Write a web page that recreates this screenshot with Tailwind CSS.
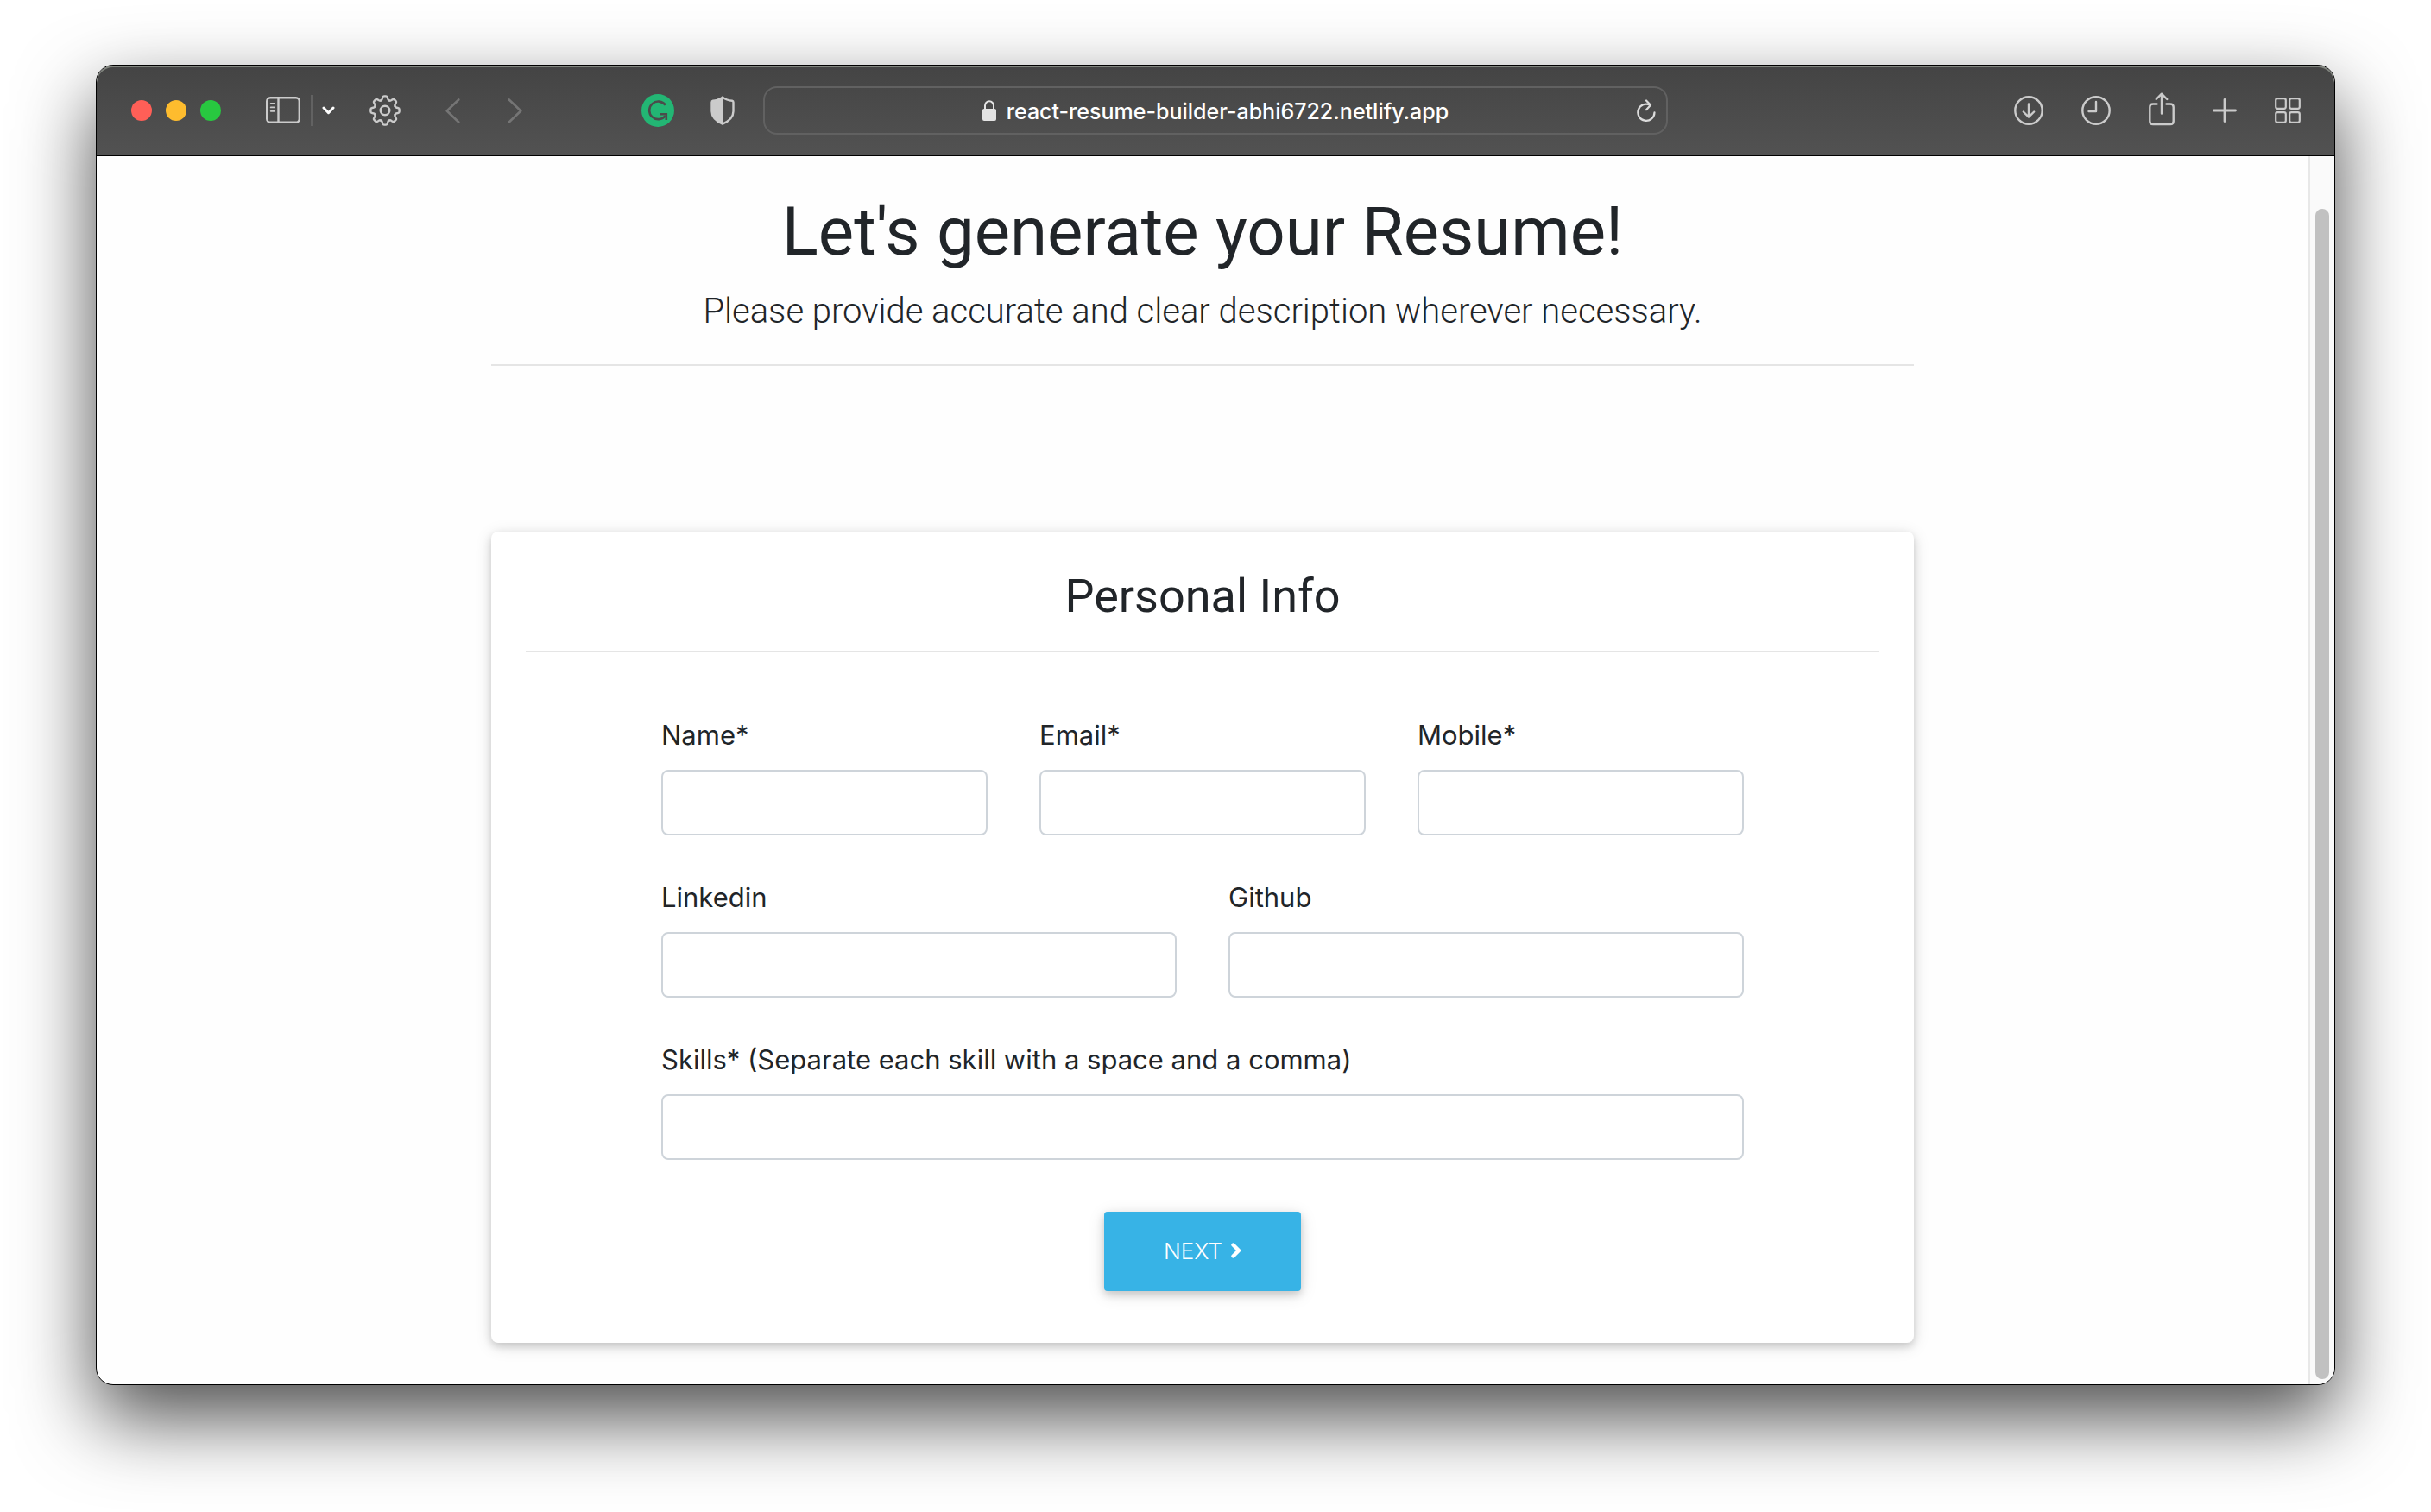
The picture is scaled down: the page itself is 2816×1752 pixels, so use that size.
<!DOCTYPE html>
<html lang="en">
<head>
<meta charset="utf-8">
<meta name="viewport" content="width=device-width, initial-scale=1">
<title>Resume Builder</title>
<script src="https://cdn.jsdelivr.net/npm/@tailwindcss/browser@4"></script>
</head>
<body class="flex min-h-screen flex-col bg-white px-[111px] pt-[75px] pb-[147px] font-['Inter',sans-serif] text-[#212529]">
<div class="flex flex-1 flex-col overflow-hidden rounded-[20px] border border-black bg-[#fefefe] shadow-[0_38px_90px_rgba(0,0,0,0.7)]">

  <!-- Browser toolbar -->
  <header class="grid h-[105px] grid-cols-[1fr_minmax(0,1048px)_1fr] items-center rounded-t-[19px] border-b border-black bg-linear-to-b from-[#444444] to-[#525252] text-[#cbcbcb] shadow-[inset_0_2px_0_#81857e]">
    <div class="flex items-center pr-[33px] pl-10">
      <div class="flex gap-4">
        <button type="button" aria-label="Close" class="size-6 rounded-full bg-[#ff5f57]"></button>
        <button type="button" aria-label="Minimize" class="size-6 rounded-full bg-[#febc2e]"></button>
        <button type="button" aria-label="Zoom" class="size-6 rounded-full bg-[#28c840]"></button>
      </div>
      <button type="button" aria-label="Sidebar" class="ml-[52px]">
        <svg class="block" width="40" height="32" viewBox="0 0 40 32" fill="none" stroke="currentColor" stroke-width="2.4" stroke-linecap="round"><rect x="1.2" y="1.2" width="37.6" height="28.6" rx="4"/><path d="M14.500 1.500v28"/><path stroke-width="1.8" d="M5.700 8h4M5.700 12.400h4M5.700 16.800h4"/></svg>
      </button>
      <span class="ml-3 h-9 w-[2px] bg-[#626262]"></span>
      <button type="button" aria-label="Sidebar options" class="ml-[11px] text-white">
        <svg class="block" width="15" height="10" viewBox="0 0 15 10" fill="none" stroke="currentColor" stroke-width="3" stroke-linecap="round" stroke-linejoin="round"><path d="M2 2l5.500 5.700L13 2"/></svg>
      </button>
      <button type="button" aria-label="Settings" class="ml-10">
        <svg class="block" width="36" height="36" viewBox="-18 -18 36 36" fill="none" stroke="currentColor" stroke-width="2.4" stroke-linecap="round" stroke-linejoin="round">
          <defs><path id="tooth" d="M-4.800-11.600Q-3.400-12.100-3.200-13.600L-3-14.800Q-2.600-16.600-1.200-16.600H1.200Q2.600-16.600 3-14.800L3.200-13.600Q3.400-12.100 4.800-11.600"/></defs>
          <use href="#tooth"/><use href="#tooth" transform="rotate(45)"/><use href="#tooth" transform="rotate(90)"/><use href="#tooth" transform="rotate(135)"/><use href="#tooth" transform="rotate(180)"/><use href="#tooth" transform="rotate(225)"/><use href="#tooth" transform="rotate(270)"/><use href="#tooth" transform="rotate(315)"/>
          <circle r="5.300"/>
        </svg>
      </button>
      <button type="button" aria-label="Back" class="ml-[52px] text-[#757575]">
        <svg class="block" width="17" height="29" viewBox="0 0 17 29" fill="none" stroke="currentColor" stroke-width="2.600" stroke-linecap="round" stroke-linejoin="round"><path d="M15.300 1.500L1.700 14.500l13.600 13"/></svg>
      </button>
      <button type="button" aria-label="Forward" class="ml-[55px] text-[#757575]">
        <svg class="block" width="17" height="29" viewBox="0 0 17 29" fill="none" stroke="currentColor" stroke-width="2.600" stroke-linecap="round" stroke-linejoin="round"><path d="M1.700 1.500l13.600 13-13.600 13"/></svg>
      </button>
      <button type="button" aria-label="Grammarly" class="ml-auto">
        <svg class="block" width="38" height="38" viewBox="0 0 38 38" fill="none" stroke="#4b4b4b" stroke-width="2.600"><circle cx="19" cy="19" r="19" fill="#23b674" stroke="none"/><path d="M27.800 12.800A10.300 10.300 0 1 0 27.600 25.200"/><path d="M21.500 23.300h7.300v6.700"/></svg>
      </button>
      <button type="button" aria-label="Privacy report" class="ml-[42px]">
        <svg class="block" width="28" height="34" viewBox="0 0 28 34"><path d="M14 1.600C17 4 21.500 5.500 25.200 5.800Q26.500 6 26.500 7.500V18c0 7-5.500 11.500-12.500 14.600C7 29.500 1.500 25 1.500 18V7.500Q1.500 6 2.800 5.800C6.500 5.500 11 4 14 1.600z" fill="none" stroke="currentColor" stroke-width="2.400"/><path d="M14 1.500V32.500C7 29.500 1.500 25 1.500 18V6z" fill="currentColor"/></svg>
      </button>
    </div>

    <div class="flex h-14 items-center rounded-2xl border-2 border-[#616161] pr-3 pl-[34px]">
      <div class="flex flex-1 items-center justify-center gap-3">
        <svg class="block" width="16" height="24" viewBox="0 0 16 24" fill="none"><rect y="10" width="16" height="14" rx="2" fill="#e4e4e4"/><path d="M3 11V6.500a5 5.300 0 0 1 10 0V11" stroke="#e4e4e4" stroke-width="2"/></svg>
        <input type="text" aria-label="Address" value="react-resume-builder-abhi6722.netlify.app" class="field-sizing-content bg-transparent pt-[2px] text-[25px] leading-8 font-medium text-white outline-none">
      </div>
      <button type="button" aria-label="Reload" class="text-[#dcdcdc]">
        <svg class="block" width="22" height="26" viewBox="0 0 22 26" fill="none" stroke="currentColor" stroke-width="2.200" stroke-linecap="round" stroke-linejoin="round"><path d="M20.500 15.300A9.600 9.600 0 1 1 15.500 6.800"/><path d="M11 1.500l5 5.300-5 5.400"/></svg>
      </button>
    </div>

    <div class="flex items-center justify-end gap-[44px] pr-[39px]">
      <button type="button" aria-label="Downloads">
        <svg class="block" width="34" height="34" viewBox="0 0 34 34" fill="none" stroke="currentColor" stroke-width="2.400" stroke-linecap="round" stroke-linejoin="round"><circle cx="17" cy="17" r="15.700"/><path d="M17 9.500v15M10.800 18.500l6.200 6.200 6.200-6.200"/></svg>
      </button>
      <button type="button" aria-label="History">
        <svg class="block" width="34" height="34" viewBox="0 0 34 34" fill="none" stroke="currentColor" stroke-width="2.400" stroke-linecap="round" stroke-linejoin="round"><circle cx="17" cy="17" r="15.700"/><path d="M17 7v11H8.500"/></svg>
      </button>
      <button type="button" aria-label="Share">
        <svg class="block" width="30" height="42" viewBox="0 0 30 42" fill="none" stroke="currentColor" stroke-width="2.400" stroke-linecap="round" stroke-linejoin="round"><path d="M9.500 13.500H5Q1.300 13.500 1.300 17V33.500Q1.300 37 5 37H25Q28.700 37 28.700 33.500V17Q28.700 13.500 25 13.500H20.500M15 2v22.500M8.700 8L15 1.700 21.300 8"/></svg>
      </button>
      <button type="button" aria-label="New tab">
        <svg class="block" width="28" height="28" viewBox="0 0 28 28" fill="none" stroke="currentColor" stroke-width="2.800" stroke-linecap="round"><path d="M14 1.500v25M1.500 14h25"/></svg>
      </button>
      <button type="button" aria-label="Tab overview">
        <svg class="block" width="30" height="30" viewBox="0 0 30 30" fill="none" stroke="currentColor" stroke-width="2.200"><rect x="1.200" y="1.200" width="11.600" height="11.600" rx="2"/><rect x="17.200" y="1.200" width="11.600" height="11.600" rx="2"/><rect x="1.200" y="17.200" width="11.600" height="11.600" rx="2"/><rect x="17.200" y="17.200" width="11.600" height="11.600" rx="2"/></svg>
      </button>
    </div>
  </header>

  <!-- Page -->
  <div class="flex flex-1">
    <main class="flex-1 px-8 pt-10 pb-12">
      <div class="mx-auto max-w-[1648px]">
        <h1 class="text-center font-['Roboto',sans-serif] text-[78px] leading-24">Let's generate your Resume!</h1>
        <p class="mt-[14px] text-center font-['Roboto',sans-serif] text-[40px] leading-[60px] font-light">Please provide accurate and clear description wherever necessary.</p>
        <hr class="mt-[31px] border-t-2 border-[#e5e5e5]">

        <section class="mt-48 rounded-lg bg-white px-10 pt-10 pb-[60px] shadow-[0_4px_10px_rgba(0,0,0,0.16),0_4px_20px_rgba(0,0,0,0.12)]">
          <h2 class="text-center font-['Roboto',sans-serif] text-[54px] leading-[70px]">Personal Info</h2>
          <hr class="mt-7 border-t-2 border-[#e5e5e5]">
          <form class="mt-[72px] flex flex-col gap-12 px-[157px] text-[31px] leading-12">
            <div class="grid grid-cols-3 gap-[60px]">
              <div class="flex flex-col gap-4">
                <label for="name">Name*</label>
                <input id="name" type="text" class="h-[76px] w-full rounded-lg border-2 border-[#ced4da] bg-white px-6">
              </div>
              <div class="flex flex-col gap-4">
                <label for="email">Email*</label>
                <input id="email" type="email" class="h-[76px] w-full rounded-lg border-2 border-[#ced4da] bg-white px-6">
              </div>
              <div class="flex flex-col gap-4">
                <label for="mobile">Mobile*</label>
                <input id="mobile" type="tel" class="h-[76px] w-full rounded-lg border-2 border-[#ced4da] bg-white px-6">
              </div>
            </div>
            <div class="grid grid-cols-2 gap-[60px]">
              <div class="flex flex-col gap-4">
                <label for="linkedin">Linkedin</label>
                <input id="linkedin" type="text" class="h-[76px] w-full rounded-lg border-2 border-[#ced4da] bg-white px-6">
              </div>
              <div class="flex flex-col gap-4">
                <label for="github">Github</label>
                <input id="github" type="text" class="h-[76px] w-full rounded-lg border-2 border-[#ced4da] bg-white px-6">
              </div>
            </div>
            <div class="flex flex-col gap-4">
              <label for="skills">Skills* (Separate each skill with a space and a comma)</label>
              <input id="skills" type="text" class="h-[76px] w-full rounded-lg border-2 border-[#ced4da] bg-white px-6">
            </div>
            <button type="button" class="mt-3 flex h-[92px] w-[228px] items-center justify-center gap-[10px] self-center rounded bg-[#37b3e6] text-[26px] font-light text-white shadow-[0_4px_10px_rgba(0,0,0,0.16),0_4px_20px_rgba(0,0,0,0.12)]">
              NEXT
              <svg class="block" width="12" height="20" viewBox="0 0 12 20" fill="none" stroke="currentColor" stroke-width="4.400" stroke-linecap="round" stroke-linejoin="round"><path d="M2.500 2.500L9 9l-6.500 6.500"/></svg>
            </button>
          </form>
        </section>
      </div>
    </main>
    <!-- Scrollbar -->
    <div class="flex w-[30px] flex-col border-l-2 border-[#e8e8e8] bg-[#fafafa] px-[6px] pt-[61px] pb-[6px]">
      <div class="flex-1 rounded-full bg-[#c1c1c1]"></div>
    </div>
  </div>
</div>
</body>
</html>
